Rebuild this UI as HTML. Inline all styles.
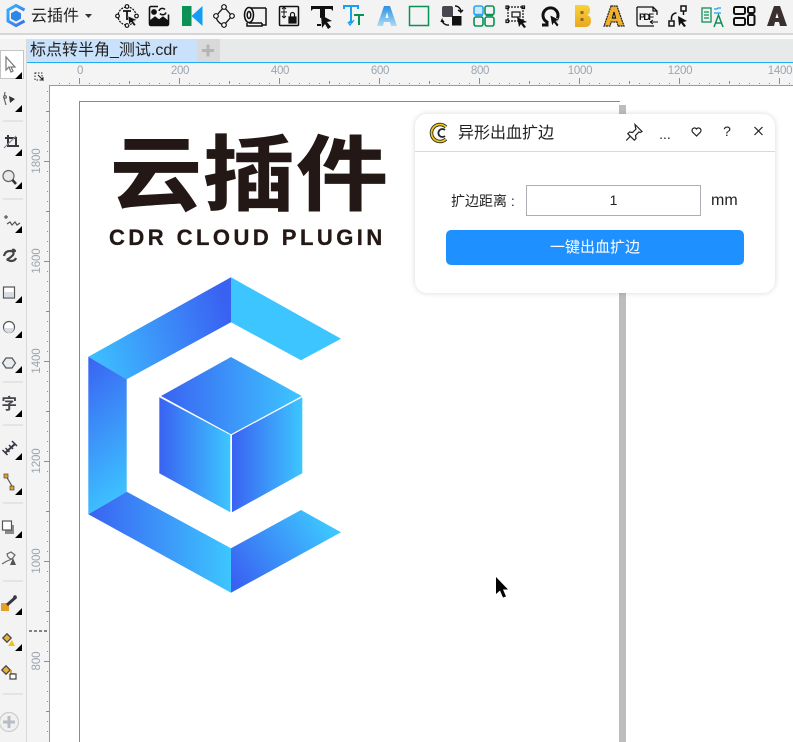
<!DOCTYPE html>
<html><head><meta charset="utf-8">
<style>
html,body{margin:0;padding:0;width:793px;height:742px;overflow:hidden;background:#fff}
body{position:relative;font-family:"Liberation Sans","Noto Sans CJK SC",sans-serif;color:#222}
.a{position:absolute}
.rh{position:absolute;top:65px;font-size:11.5px;letter-spacing:-.3px;color:#9ba5b0;width:50px;text-align:center;line-height:12px}
.rv{position:absolute;left:12px;width:50px;text-align:center;font-size:11.5px;letter-spacing:-.1px;line-height:12px;color:#9ba5b0;transform:rotate(-90deg)}
svg{position:absolute;left:0;top:0}
</style></head><body>
<div class="a" style="left:0;top:0;width:793px;height:33px;background:#f3f3f3"></div>
<div class="a" style="left:0;top:33px;width:793px;height:2px;background:#d6d6d6"></div>
<div class="a" style="left:0;top:35px;width:793px;height:4px;background:#fafafa"></div>
<div class="a" style="left:0;top:39px;width:793px;height:23px;background:#e8eaea"></div>
<div class="a" style="left:27px;top:39px;width:170px;height:23px;background:#c9e1fb"></div>
<div class="a" style="left:197px;top:39px;width:23px;height:23px;background:#d9d9d9"></div>
<div class="a" style="left:27px;top:61.5px;width:766px;height:1.5px;background:#1fadf8"></div>
<div class="a" style="left:0;top:39px;width:27px;height:703px;background:#f3f3f3"></div>
<div class="a" style="left:26px;top:39px;width:1px;height:703px;background:#d8d8d8"></div>
<div class="a" style="left:27px;top:63px;width:766px;height:22px;background:#f4f4f4"></div>
<div class="a" style="left:27px;top:63px;width:22px;height:679px;background:#f4f4f4"></div>
<div class="a" style="left:49px;top:85px;width:744px;height:1px;background:#999"></div>
<div class="a" style="left:49px;top:85px;width:1px;height:657px;background:#999"></div>
<div class="a" style="left:79px;top:101px;width:541px;height:641px;border:1px solid #8a8a8a;border-bottom:0;border-right:0;box-sizing:border-box;background:#fff"></div>
<div class="a" style="left:619px;top:105px;width:7px;height:637px;background:#bdbdbd"></div>
<div class="a" style="left:0;top:50px;width:24px;height:29px;background:#fff;border:1px solid #c4c4c4;box-sizing:border-box"></div>

<div class="a" style="left:31px;top:6px;font-size:16px;line-height:22px;white-space:nowrap">云插件</div>
<div class="a" style="left:30px;top:40px;font-size:16px;line-height:22px;white-space:nowrap;color:#222">标点转半角_测试.cdr</div>

<div class="rh" style="left:55px">0</div><div class="rh" style="left:155px">200</div><div class="rh" style="left:255px">400</div><div class="rh" style="left:355px">600</div><div class="rh" style="left:455px">800</div><div class="rh" style="left:555px">1000</div><div class="rh" style="left:655px">1200</div><div class="rh" style="left:755px">1400</div>
<div class="rv" style="top:155px">1800</div><div class="rv" style="top:255px">1600</div><div class="rv" style="top:355px">1400</div><div class="rv" style="top:455px">1200</div><div class="rv" style="top:555px">1000</div><div class="rv" style="top:655px">800</div>

<div class="a" style="left:110px;top:108px;font-family:'Noto Sans CJK SC',sans-serif;font-weight:700;font-size:92px;line-height:130px;letter-spacing:1px;color:#231815;white-space:nowrap;transform:scaleY(.89);transform-origin:0 25px;-webkit-text-stroke:.8px #231815">云插件</div>
<div class="a" style="left:109px;top:225px;font-family:'Liberation Sans',sans-serif;font-weight:700;font-size:22px;line-height:26px;letter-spacing:3.47px;color:#231815;white-space:nowrap;-webkit-text-stroke:.3px #231815">CDR CLOUD PLUGIN</div>

<svg width="793" height="742" viewBox="0 0 793 742">
<defs>
<linearGradient id="h" x1="0" y1="0" x2="1" y2="0"><stop offset="0" stop-color="#3a62f2"/><stop offset="1" stop-color="#3dc6ff"/></linearGradient>
<linearGradient id="r" x1="0" y1="0.7" x2="1" y2="0.5"><stop offset="0" stop-color="#3dc0ff"/><stop offset="1" stop-color="#3a62f2"/></linearGradient>
<linearGradient id="v" x1="0" y1="0" x2="0.2" y2="1"><stop offset="0" stop-color="#3a62f2"/><stop offset="1" stop-color="#3dc0ff"/></linearGradient>
<linearGradient id="br" x1="0.05" y1="0.9" x2="1" y2="0.4"><stop offset="0" stop-color="#3a62f2"/><stop offset="1" stop-color="#3dc6ff"/></linearGradient>
<linearGradient id="gold" x1="0" y1="0" x2="0" y2="1"><stop offset="0" stop-color="#f7d23c"/><stop offset="1" stop-color="#e9a820"/></linearGradient>
<linearGradient id="ba" x1="0" y1="0" x2="0" y2="1"><stop offset="0" stop-color="#2f8fe0"/><stop offset="1" stop-color="#a8dcf8"/></linearGradient>
<linearGradient id="ap" x1="0" y1="0" x2="1" y2="1"><stop offset="0" stop-color="#39b5f5"/><stop offset="1" stop-color="#3a6cf0"/></linearGradient>
</defs>

<!-- ruler ticks -->
<g fill="#8d8d8d" shape-rendering="crispEdges">
<path d="M79 78h1v6h-1zM179 78h1v6h-1zM279 78h1v6h-1zM379 78h1v6h-1zM479 78h1v6h-1zM579 78h1v6h-1zM679 78h1v6h-1zM779 78h1v6h-1zM129 81h1v3h-1zM229 81h1v3h-1zM329 81h1v3h-1zM429 81h1v3h-1zM529 81h1v3h-1zM629 81h1v3h-1zM729 81h1v3h-1zM59 83h1v1h-1zM69 83h1v1h-1zM89 83h1v1h-1zM99 83h1v1h-1zM109 83h1v1h-1zM119 83h1v1h-1zM139 83h1v1h-1zM149 83h1v1h-1zM159 83h1v1h-1zM169 83h1v1h-1zM189 83h1v1h-1zM199 83h1v1h-1zM209 83h1v1h-1zM219 83h1v1h-1zM239 83h1v1h-1zM249 83h1v1h-1zM259 83h1v1h-1zM269 83h1v1h-1zM289 83h1v1h-1zM299 83h1v1h-1zM309 83h1v1h-1zM319 83h1v1h-1zM339 83h1v1h-1zM349 83h1v1h-1zM359 83h1v1h-1zM369 83h1v1h-1zM389 83h1v1h-1zM399 83h1v1h-1zM409 83h1v1h-1zM419 83h1v1h-1zM439 83h1v1h-1zM449 83h1v1h-1zM459 83h1v1h-1zM469 83h1v1h-1zM489 83h1v1h-1zM499 83h1v1h-1zM509 83h1v1h-1zM519 83h1v1h-1zM539 83h1v1h-1zM549 83h1v1h-1zM559 83h1v1h-1zM569 83h1v1h-1zM589 83h1v1h-1zM599 83h1v1h-1zM609 83h1v1h-1zM619 83h1v1h-1zM639 83h1v1h-1zM649 83h1v1h-1zM659 83h1v1h-1zM669 83h1v1h-1zM689 83h1v1h-1zM699 83h1v1h-1zM709 83h1v1h-1zM719 83h1v1h-1zM739 83h1v1h-1zM749 83h1v1h-1zM759 83h1v1h-1zM769 83h1v1h-1zM789 83h1v1h-1z"/>
<path d="M44 161h5v1h-5zM44 261h5v1h-5zM44 361h5v1h-5zM44 461h5v1h-5zM44 561h5v1h-5zM44 661h5v1h-5zM46 111h3v1h-3zM46 211h3v1h-3zM46 311h3v1h-3zM46 411h3v1h-3zM46 511h3v1h-3zM46 611h3v1h-3zM46 711h3v1h-3zM47 91h1v1h-1zM47 101h1v1h-1zM47 121h1v1h-1zM47 131h1v1h-1zM47 141h1v1h-1zM47 151h1v1h-1zM47 171h1v1h-1zM47 181h1v1h-1zM47 191h1v1h-1zM47 201h1v1h-1zM47 221h1v1h-1zM47 231h1v1h-1zM47 241h1v1h-1zM47 251h1v1h-1zM47 271h1v1h-1zM47 281h1v1h-1zM47 291h1v1h-1zM47 301h1v1h-1zM47 321h1v1h-1zM47 331h1v1h-1zM47 341h1v1h-1zM47 351h1v1h-1zM47 371h1v1h-1zM47 381h1v1h-1zM47 391h1v1h-1zM47 401h1v1h-1zM47 421h1v1h-1zM47 431h1v1h-1zM47 441h1v1h-1zM47 451h1v1h-1zM47 471h1v1h-1zM47 481h1v1h-1zM47 491h1v1h-1zM47 501h1v1h-1zM47 521h1v1h-1zM47 531h1v1h-1zM47 541h1v1h-1zM47 551h1v1h-1zM47 571h1v1h-1zM47 581h1v1h-1zM47 591h1v1h-1zM47 601h1v1h-1zM47 621h1v1h-1zM47 641h1v1h-1zM47 651h1v1h-1zM47 671h1v1h-1zM47 681h1v1h-1zM47 691h1v1h-1zM47 701h1v1h-1zM47 721h1v1h-1zM47 731h1v1h-1z"/>
</g>
<path d="M29 631h20" stroke="#111" stroke-dasharray="3 2" shape-rendering="crispEdges"/>
<g stroke="#222" fill="none" stroke-dasharray="1.5 1.500"><rect x="35" y="73" width="7" height="7"/></g>
<path d="M38 75l5 5v-3M43 80h-3" stroke="#222" fill="none"/>

<!-- plus in tab -->
<path d="M202 50.500h12M208 44.500v12" stroke="#b4b4b4" stroke-width="3"/>

<!-- app logo -->
<path d="M24.500 10L16 5.500 8 10V21L16 25.500 24.500 21" fill="none" stroke="url(#ap)" stroke-width="3"/>
<path d="M16 10.500l5 2.800v5.400l-5 2.800-5-2.800v-5.400z" fill="#2f85ea"/>
<path d="M85 14h7l-3.500 4z" fill="#333"/>

<!-- top toolbar icons -->
<g fill="none" stroke="#111" stroke-width="1.200">
<g transform="translate(127,16)"><circle r="9" stroke-dasharray="2 1"/><circle cx="0" cy="-9.500" r="1.800" fill="#fff"/><circle cx="-9.500" cy="0" r="1.800" fill="#fff"/><circle cx="9.500" cy="0" r="1.800" fill="#fff"/><circle cx="0" cy="9.500" r="1.800" fill="#fff"/><path d="M-4-5h8M0-5v9" stroke-width="1.800"/><path d="M1 0l9 4-4 1 3 4-2 1-3-4-2 3z" fill="#111" stroke="#fff" stroke-width=".5"/></g>
<g transform="translate(159,16)"><rect x="-9.500" y="-9.500" width="19" height="19" rx="1.500" stroke-width="1.600"/><circle cx="-5" cy="-4" r="2.300" fill="#111"/><path d="M-9 9v-4l5-4 4 3 4-3 5 4v4z" fill="#111"/><rect x="-1" y="-10.500" width="12" height="9" fill="#f3f3f3" stroke="none"/><path d="M0-5a3.500 3.500 0 0 1 6-1.500M7-3.500a3.500 3.500 0 0 1-6 1" stroke-width="1.500"/></g>
<g transform="translate(192,16)" stroke="none"><rect x="-10" y="-10" width="9.500" height="20" fill="#0a9156"/><path d="M-0.500 0L10.500-10V10z" fill="#129cf3"/></g>
<g transform="translate(224,16)"><path d="M-8 0L0-9 8 0M-8 0a10 10 0 0 0 8 9l8-9" stroke-width="1.300"/><circle cx="-8" cy="0" r="2.300" fill="#fff"/><circle cx="0" cy="-9" r="2.300" fill="#fff"/><circle cx="8" cy="0" r="2.300" fill="#fff"/><circle cx="0" cy="9" r="2.300" fill="#fff"/></g>
<g transform="translate(257,16)" stroke-width="1.500"><path d="M-8-8H9M-8 7H5M9-8V9H5"/><ellipse cx="-8" cy="-1" rx="4.500" ry="7.500" fill="#f3f3f3"/><ellipse cx="-8" cy="-1" rx="1.800" ry="3.500"/><path d="M-10 7v3h15v-3"/></g>
<g transform="translate(289,16)"><rect x="-9.500" y="-9.500" width="19" height="19" rx="1" stroke-width="1.500"/><path d="M-5-8v9M-8-4h6M-5-9l-2 2M-5-9l2 2M-5 2l-2-2M-5 2l2-2" stroke-width="1"/><rect x="0" y="1" width="7" height="6" fill="#111"/><path d="M1.500 1v-2.500a2 2 0 0 1 4 0V1"/></g>
<g transform="translate(322,16)"><path d="M-11-10H11V-5L9-7H3V1L-2 2V-7H-9L-11-5z" fill="#111" stroke="none"/><path d="M-1-1l11 6-5 1 4 5-3 2-3-5-3 4z" fill="#111" stroke="none"/><path d="M-5 9h4" stroke-width="2"/></g>
<g transform="translate(354,16)" stroke-width="2"><path d="M-10-7v-3H4v3M-3-10V6M-5 6h4" stroke="#18a0ef"/><path d="M0-1H10M5-1V9" stroke="#0a9156"/><path d="M-6 6l2 3 4-5" stroke="#18a0ef" stroke-width="1.300"/></g>
<g transform="translate(419,16)" stroke="#0a9156" stroke-width="1.500"><rect x="-9.500" y="-9.500" width="19" height="19"/></g>
<g transform="translate(452,16)"><rect x="-10" y="-10" width="11" height="11" rx="2" fill="#4a4650" stroke="none"/><rect x="0" y="0" width="9.500" height="9.500" fill="#111" stroke="none"/><path d="M3-10a6 6 0 0 1 6 6l2-2M9-4l-3-2M-3 9a6 6 0 0 1-7-5l-1 2M-10 4l2 2" stroke-width="1.400"/></g>
<g transform="translate(484,16)" stroke-width="1.600"><rect x="-10" y="-10" width="9" height="9" rx="2" stroke="#2fa3ee" fill="#cce8fb"/><rect x="1" y="-10" width="9" height="9" rx="2" stroke="#0a9156"/><rect x="-10" y="1" width="9" height="9" rx="2" stroke="#0a9156"/><rect x="1" y="1" width="9" height="9" rx="2" stroke="#0a9156"/><path d="M-9-1h8" stroke="#2fa3ee" stroke-width="2.500"/><path d="M2-1h7" stroke="#0a9156" stroke-width="2.500"/></g>
<g transform="translate(517,16)"><rect x="-9" y="-9" width="15" height="14" stroke-dasharray="2 1"/><rect x="-5" y="-4" width="8" height="5"/><rect x="-11" y="-10" width="2.500" height="2.500"/><rect x="5" y="-10" width="2.500" height="2.500"/><rect x="-11" y="4" width="2.500" height="2.500"/><path d="M0 1l10 5-4 1 3 4-2 1-3-4-2 3z" fill="#111" stroke="none"/></g>
<g transform="translate(550,16)"><path d="M-8 9h5v-3a7.500 7.500 0 1 1 7 0" stroke-width="3"/><path d="M0-1l10 5-4 1 3 4-2 2-3-4-2 3z" fill="#111" stroke="#fff" stroke-width=".6"/></g>
<g transform="translate(582,16)" stroke="none"><path d="M-7-11H3Q8-11 8-5.500Q8-2 5-1Q9 0 9 4.500Q9 11 3 11H-7z" fill="url(#gold)"/><rect x="-1.500" y="-5" width="3" height="3" fill="#8a6a20"/><rect x="-1.500" y="2" width="3" height="3" fill="#8a6a20"/></g>
<g transform="translate(614,16)"><path d="M-3-10H3L10 10H4L3 6H-3L-4 10H-10z" fill="#f0b030" stroke="#222" stroke-width="1.200" stroke-dasharray="2 .6"/><path d="M0-4L-1.500 2H1.500z" fill="#fff"/></g>
<g transform="translate(647,16)" stroke-width="1.300"><path d="M-10-9V8q0 2 2 2H7M-10-9H6L10-5V-1M6-9v4h4"/><path d="M3 6H11M3 6l3-2M3 6l3 2" stroke-width="1"/></g>
<text x="639" y="20" font-family="Liberation Sans" font-size="9.500" font-weight="700" fill="#111" textLength="15" stroke="none">PDF</text>
<g transform="translate(679,16)" stroke-width="1.500"><rect x="2" y="-10" width="5" height="5"/><rect x="-10" y="5" width="5" height="5"/><path d="M-7.500 4v-2a5 5 0 0 1 5-5"/><path d="M4.500-5V-1"/><path d="M-1 0l9 5-4 1 3 4-2 1-3-4-2 3z" fill="#111" stroke="none"/></g>
<g transform="translate(712,16)" stroke="#0a9156" stroke-width="1.300"><rect x="-10" y="-8" width="9" height="14"/><path d="M-8-4h5M-8-1h5M-8 2h5"/><path d="M2 11L6.500-1 11 11M4 7h5" stroke-width="1.500"/><path d="M2-7h3l1-1h3M2-3h7" stroke="#18a0ef"/></g>
<g transform="translate(744,16)" stroke-width="2"><rect x="-10" y="-9" width="11" height="7" rx="1.500"/><rect x="-10" y="2" width="11" height="7" rx="1.500"/><rect x="4" y="-9" width="6.500" height="6" rx="1.500"/><rect x="4" y="-1" width="6.500" height="10" rx="1.500"/></g>
<g transform="translate(777,16)" stroke="none"><path d="M-3-10H3L10 10H3L2 6H-2L-3 10H-10z" fill="#3a3030"/><path d="M0-3L-1.500 2H1.500z" fill="#fff"/></g>
</g>
<g transform="translate(387,16)"><path d="M-3-10H3L10 10H4L3 6H-3L-4 10H-10z" fill="url(#ba)"/><path d="M0-4L-1.500 2H1.500z" fill="#fff"/></g>

<!-- left toolbar -->
<g fill="#000">
<path d="M22 72v7h-7zM22 105v7h-7zM22 149v7h-7zM22 182v7h-7zM22 226v7h-7zM22 296v7h-7zM22 331v7h-7zM22 366v7h-7zM22 410v7h-7zM22 453v7h-7zM22 488v7h-7zM22 531v7h-7zM22 608v7h-7zM22 644v7h-7z"/>
</g>
<path d="M3 121h20M3 199h20M3 382h20M3 425h20M3 503h20M3 581h20M3 694h20" stroke="#d4d4d4" stroke-width="1" shape-rendering="crispEdges"/>
<g fill="none" stroke="#555" stroke-width="1.200">
<path d="M6 57l0 13 3-3 2 5 2-1-2-4h4z" fill="#fff" stroke="#777"/>
<path d="M5 92l-1 6 2 7" stroke="#666"/><circle cx="5" cy="97" r="1.300" fill="#fff"/><path d="M9 96l6 3-5 4z" fill="#333" stroke="none"/>
<path d="M5 138h11v8M8 135v11h11" stroke="#3a3542" stroke-width="2"/><path d="M4 148l12-12" stroke="#888"/>
<circle cx="8.500" cy="176" r="5.500" fill="#e8e8e8" stroke="#666"/><path d="M12.500 180l3.500 4" stroke="#333" stroke-width="2.500"/>
<path d="M4 217h4M6 215v4M7 224l3-2 2 3 3-3 2 3 3-2" stroke="#555"/>
<path d="M4 256q1-5 6-5t3 4q-3 3-5 4t3 2q4 0 5-3M12 250q3-1 3 2" stroke="#444" stroke-width="2.200"/>
<rect x="3.500" y="287" width="11" height="11" fill="#fff" stroke="#555"/><rect x="4" y="292" width="10" height="5.500" fill="#d8dce4" stroke="none"/>
<circle cx="9" cy="327" r="5.500" fill="#fff" stroke="#555"/><path d="M4 328a5 5 0 0 0 10 0z" fill="#d8dce4" stroke="none"/>
<path d="M6 358h6l3.500 5-3.500 5H6l-3.500-5z" fill="#e8ebf0" stroke="#555"/>
<path d="M5 453l10-9" stroke="#3a3542" stroke-width="2"/><path d="M2.500 450l5 5M5.500 448l4 4M9 445l4 4M12 441l5 5" stroke="#3a3542" stroke-width="1.500"/>
<path d="M6 476l6 10" stroke="#555"/><rect x="4" y="474" width="4" height="4" fill="#e8a020" stroke="#444" stroke-width=".7"/><rect x="10" y="486" width="4" height="4" fill="#e8a020" stroke="#444" stroke-width=".7"/>
<rect x="5" y="525" width="9" height="9" fill="#8a8a92" stroke="none"/><rect x="2.500" y="521" width="9" height="9" fill="#fff" stroke="#555"/>
<path d="M7 554l4-2 4 3-3 4q-4 0-5-5zM7 561l5-2M2 564l5-3" stroke="#666"/><path d="M13 558l3 7h-6z" fill="#555" stroke="none"/>
<rect x="1" y="603" width="8" height="8" fill="#e5a02a" stroke="none"/><path d="M7 605l9-8" stroke="#3a3542" stroke-width="3"/><circle cx="15" cy="597" r="1.800" fill="#3a3542" stroke="none"/>
<rect x="4" y="635" width="6" height="6" transform="rotate(45 7 638)" fill="#e5b040" stroke="#444"/><path d="M12 640l3 6H8z" fill="#f0c020" stroke="none"/>
<rect x="3" y="667" width="6" height="6" transform="rotate(45 6 670)" fill="#e5b040" stroke="#444"/><path d="M11 670v4h4" stroke="#e5a020" stroke-width="2"/><rect x="10" y="674" width="6" height="5" fill="#fff" stroke="#444"/>
<circle cx="9" cy="722" r="9.500" fill="#f0f0f0" stroke="#ccc"/><path d="M3 722h12M9 716v12" stroke="#b8bcc6" stroke-width="3"/>
</g>
<text x="1.500" y="409" font-family="Noto Sans CJK SC" font-weight="700" font-size="15.500" fill="#45454c">字</text>

<!-- big logo -->
<polygon points="88.300,356.700 231,277.300 231,322.300 126.700,379.300" fill="url(#r)"/>
<polygon points="231,277.300 341,338.700 301,360.300 231,322.300" fill="#3dc5ff"/>
<polygon points="88.300,356.700 126.700,379.300 126.700,491.700 88.300,514.300" fill="url(#v)"/>
<polygon points="88.300,514.300 126.700,491.700 231,548.300 231,592.700" fill="url(#h)"/>
<polygon points="231,548.300 301,510 341,532.300 231,592.700" fill="url(#br)"/>
<polygon points="161,396 231,357 301.700,396 231,434.300" fill="url(#h)"/>
<polygon points="159.300,397.300 230.300,435 230.300,512.300 159.300,473.300" fill="url(#h)"/>
<polygon points="232,435 302.300,397.300 302.300,473.300 232,512.300" fill="url(#h)"/>

<!-- mouse cursor -->
<path d="M496 577v17l4-3.500 3 7 3-1-3-7h5z" fill="#000"/>
</svg>

<!-- panel -->
<div class="a" style="left:415px;top:114px;width:360px;height:179px;background:#fff;border-radius:12px;box-shadow:0 0 6px rgba(0,0,0,.16)"></div>
<div class="a" style="left:415px;top:151px;width:360px;height:1px;background:#d9d9d9"></div>
<div class="a" style="left:458px;top:122px;font-size:16px;line-height:24px;color:#222;white-space:nowrap">异形出血扩边</div>
<div class="a" style="left:451px;top:191px;font-size:14px;line-height:21px;color:#222;white-space:nowrap">扩边距离 :</div>
<div class="a" style="left:526px;top:185px;width:175px;height:31px;border:1px solid #adadb5;box-sizing:border-box;text-align:center;font-size:14px;line-height:29px;color:#222">1</div>
<div class="a" style="left:711px;top:190px;font-size:16px;line-height:21px;color:#222">mm</div>
<div class="a" style="left:446px;top:230px;width:298px;height:35px;background:#1e90ff;border-radius:5px;text-align:center;font-size:15px;line-height:36px;color:#fff">一键出血扩边</div>
<div class="a" style="left:655px;top:122px;width:20px;text-align:center;font-size:14px;line-height:24px;color:#222">...</div>
<div class="a" style="left:717px;top:119px;width:20px;text-align:center;font-size:14px;line-height:24px;color:#222">?</div>
<svg width="793" height="742" viewBox="0 0 793 742" style="pointer-events:none">
<path d="M446 127a8.500 8.500 0 1 0 0 12" fill="none" stroke="#222" stroke-width="3.500"/>
<path d="M446 127a8.500 8.500 0 1 0 0 12" fill="none" stroke="#f2c811" stroke-width="1.800"/>
<path d="M445 130a4 4 0 1 0 0 6" fill="none" stroke="#222" stroke-width="1.800"/>
<g fill="none" stroke="#222" stroke-width="1.200">
<path d="M635 124.500l7 7-1.700 1-1.300-.5-3.500 3.500.5 3-1.700 1.700-6.500-6.500 1.700-1.700 3 .5 3.500-3.500-.5-1.300z"/>
<path d="M630 136.500l-3.700 4"/>
<path d="M696.500 136l-4-4a2.500 2.500 0 0 1 4-3a2.500 2.500 0 0 1 4 3z"/>
<path d="M754.500 127l8 8M762.500 127l-8 8" stroke-width="1.200"/>
</g>
</svg>
</body></html>
